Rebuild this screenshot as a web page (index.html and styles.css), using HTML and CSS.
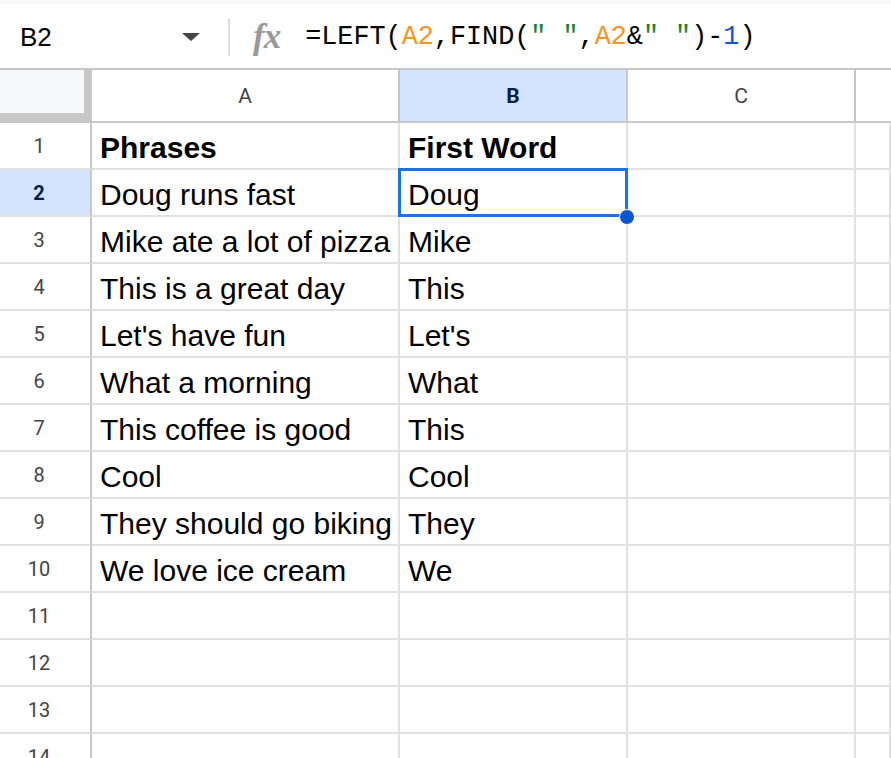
FILE: index.html
```html
<!DOCTYPE html>
<html lang="en">
<head>
    <meta charset="UTF-8">
    <title>Spreadsheet - First Word</title>
    <link rel="stylesheet" href="styles.css">
</head>
<body>
    <div class="top-strip"></div>

    <div class="formula-bar">
        <div class="name-box">B2</div>
        <span class="dropdown"></span>
        <span class="divider"></span>
        <span class="fx">fx</span>
        <div class="formula">=LEFT(<span class="ref">A2</span>,FIND(<span class="str">" "</span>,<span class="ref">A2</span>&amp;<span class="str">" "</span>)-<span class="num">1</span>)</div>
    </div>

    <div class="sheet">
        <div class="corner"></div>
        <div class="col-head">A</div>
        <div class="col-head selected">B</div>
        <div class="col-head">C</div>
        <div class="col-head last"></div>

        <div class="row-head">1</div>
        <div class="cell bold">Phrases</div>
        <div class="cell bold">First Word</div>
        <div class="cell"></div>
        <div class="cell"></div>

        <div class="row-head selected">2</div>
        <div class="cell">Doug runs fast</div>
        <div class="cell active">Doug<span class="handle"></span></div>
        <div class="cell"></div>
        <div class="cell"></div>

        <div class="row-head">3</div>
        <div class="cell">Mike ate a lot of pizza</div>
        <div class="cell">Mike</div>
        <div class="cell"></div>
        <div class="cell"></div>

        <div class="row-head">4</div>
        <div class="cell">This is a great day</div>
        <div class="cell">This</div>
        <div class="cell"></div>
        <div class="cell"></div>

        <div class="row-head">5</div>
        <div class="cell">Let's have fun</div>
        <div class="cell">Let's</div>
        <div class="cell"></div>
        <div class="cell"></div>

        <div class="row-head">6</div>
        <div class="cell">What a morning</div>
        <div class="cell">What</div>
        <div class="cell"></div>
        <div class="cell"></div>

        <div class="row-head">7</div>
        <div class="cell">This coffee is good</div>
        <div class="cell">This</div>
        <div class="cell"></div>
        <div class="cell"></div>

        <div class="row-head">8</div>
        <div class="cell">Cool</div>
        <div class="cell">Cool</div>
        <div class="cell"></div>
        <div class="cell"></div>

        <div class="row-head">9</div>
        <div class="cell">They should go biking</div>
        <div class="cell">They</div>
        <div class="cell"></div>
        <div class="cell"></div>

        <div class="row-head">10</div>
        <div class="cell">We love ice cream</div>
        <div class="cell">We</div>
        <div class="cell"></div>
        <div class="cell"></div>

        <div class="row-head">11</div>
        <div class="cell"></div>
        <div class="cell"></div>
        <div class="cell"></div>
        <div class="cell"></div>

        <div class="row-head">12</div>
        <div class="cell"></div>
        <div class="cell"></div>
        <div class="cell"></div>
        <div class="cell"></div>

        <div class="row-head">13</div>
        <div class="cell"></div>
        <div class="cell"></div>
        <div class="cell"></div>
        <div class="cell"></div>

        <div class="row-head">14</div>
        <div class="cell"></div>
        <div class="cell"></div>
        <div class="cell"></div>
        <div class="cell"></div>
    </div>
</body>
</html>
```

FILE: styles.css
```css
* {
    box-sizing: border-box;
}

body {
    margin: 0;
    background-color: #fff;
    font-family: "Liberation Sans", Arial, sans-serif;
    overflow: hidden;
    height: 758px;
}

.top-strip {
    height: 4px;
    background-color: #f8f9fa;
}

/* formula bar */

.formula-bar {
    display: flex;
    align-items: center;
    height: 66px;
    padding-top: 2px;
    border-bottom: 2px solid #c7c7c7;
}

.name-box {
    width: 162px;
    padding-left: 20px;
    font-size: 26px;
    color: #000;
}

.dropdown {
    width: 0;
    height: 0;
    margin-left: 20px;
    border-left: 9px solid transparent;
    border-right: 9px solid transparent;
    border-top: 8px solid #444;
}

.divider {
    width: 2px;
    height: 37px;
    margin-left: 28px;
    background-color: #dadce0;
}

.fx {
    margin-left: 23px;
    font-family: "Liberation Serif", serif;
    font-style: italic;
    font-weight: bold;
    font-size: 35px;
    color: #999;
    letter-spacing: -1px;
}

.formula {
    margin-left: 25px;
    font-family: "Liberation Mono", "DejaVu Sans Mono", monospace;
    font-size: 26.8px;
    color: #000;
    white-space: pre;
}

.formula .ref {
    color: #f7941d;
}

.formula .str {
    color: #188038;
}

.formula .num {
    color: #1155cc;
}

/* grid */

.sheet {
    display: grid;
    grid-template-columns: 92px 308px 228px 228px 1fr;
    grid-template-rows: 53px;
    grid-auto-rows: 47px;
}

.corner {
    background-color: #f8f9fa;
    border-right: 8px solid #c7c7c7;
    border-bottom: 10px solid #c7c7c7;
}

.col-head {
    display: flex;
    align-items: center;
    justify-content: center;
    font-family: Roboto, "Liberation Sans", sans-serif;
    font-size: 21px;
    color: #444;
    border-right: 2px solid #c7c7c7;
    border-bottom: 2px solid #c7c7c7;
}

.col-head.last {
    border-right: none;
}

.col-head.selected,
.row-head.selected {
    background-color: #d3e3fd;
    color: #041e49;
    font-weight: bold;
}

.row-head {
    display: flex;
    align-items: center;
    justify-content: center;
    padding-right: 12px;
    font-family: Roboto, "Liberation Sans", sans-serif;
    font-size: 20px;
    color: #444;
    border-right: 2px solid #c7c7c7;
    border-bottom: 2px solid #e1e1e1;
}

.cell {
    position: relative;
    display: flex;
    align-items: flex-end;
    padding: 0 0 3px 8px;
    font-size: 30px;
    color: #000;
    white-space: nowrap;
    border-right: 2px solid #e1e1e1;
    border-bottom: 2px solid #e1e1e1;
}

.cell.bold {
    font-weight: bold;
}

.cell.active::after {
    content: "";
    position: absolute;
    top: -2px;
    left: -2px;
    right: -2px;
    bottom: -2px;
    border: 3px solid #1a73e8;
}

.handle {
    position: absolute;
    right: -9px;
    bottom: -10px;
    width: 16px;
    height: 16px;
    border-radius: 50%;
    background-color: #0b57d0;
    border: 1px solid #fff;
    z-index: 1;
}
```
